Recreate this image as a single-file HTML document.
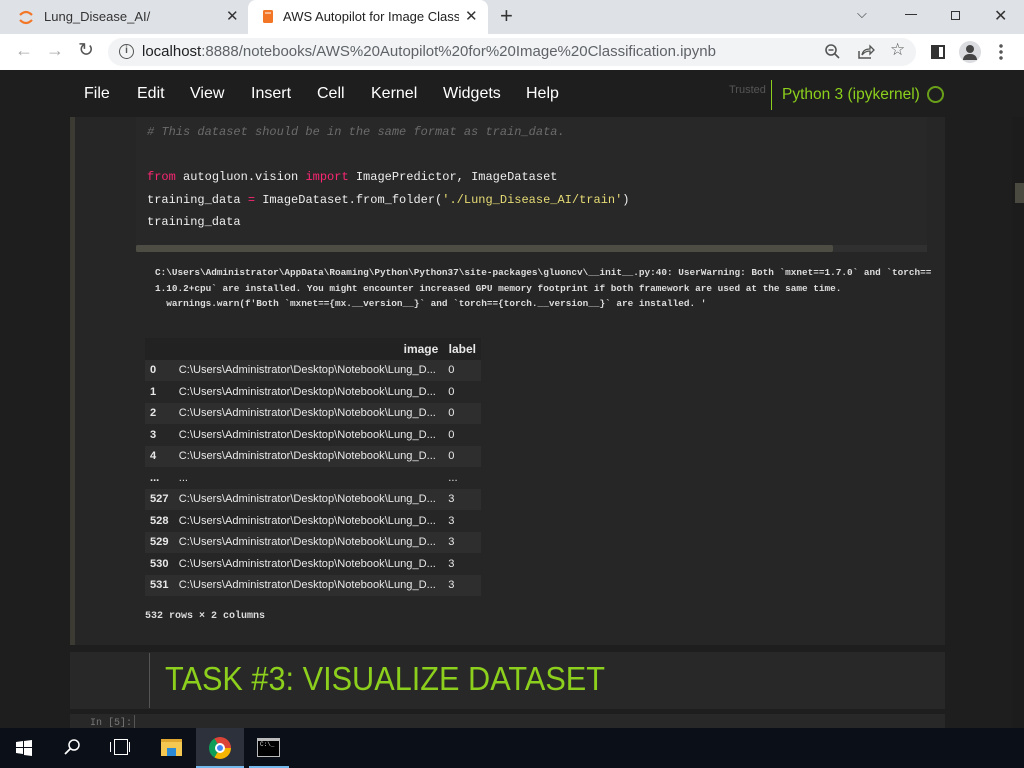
<!DOCTYPE html>
<html><head><meta charset="utf-8"><style>
*{margin:0;padding:0;box-sizing:border-box}
body{width:1024px;height:768px;overflow:hidden;background:#1e1e1e;font-family:"Liberation Sans",sans-serif;position:relative}
.abs{position:absolute}
.mono{font-family:"Liberation Mono",monospace}
#tabs{left:0;top:0;width:1024px;height:34px;background:#dee1e6}
#addr{left:0;top:34px;width:1024px;height:36px;background:#fff}
#hdr{left:0;top:70px;width:1024px;height:47px;background:#1e1e1e}
.menu{top:85px;color:#fff;font-size:16px}
table{border-collapse:collapse;font-size:11.1px;color:#e8e8e8;font-family:"Liberation Sans",sans-serif}
td,th{height:21.5px;padding:0 5px;white-space:nowrap}
th{font-weight:bold;text-align:right;font-size:12px}
td:first-child{font-weight:bold}
tr.s td{background:#2e2e2e}
</style></head><body>
<div id="tabs" class="abs">
 <div class="abs" style="left:248px;top:0;width:240px;height:34px;background:#fff;border-radius:8px 8px 0 0"></div>
 <svg class="abs" style="left:18px;top:9px" width="16" height="16"><path d="M2 6 Q8 0 14 6" stroke="#f37626" stroke-width="2.2" fill="none"/><path d="M2 11 Q8 17 14 11" stroke="#f37626" stroke-width="2.2" fill="none"/></svg>
 <div class="abs" style="left:44px;top:9px;font-size:13px;color:#333">Lung_Disease_AI/</div>
 <div class="abs" style="left:226px;top:7px;font-size:15px;color:#333">✕</div>
 <svg class="abs" style="left:261px;top:9px" width="14" height="15"><rect x="2" y="1" width="10" height="13" rx="1.5" fill="#f37626"/><path d="M4 4h6" stroke="#fff"/></svg>
 <div class="abs" style="left:283px;top:9px;font-size:13px;color:#222;width:176px;overflow:hidden;white-space:nowrap">AWS Autopilot for Image Classific</div>
 <div class="abs" style="left:465px;top:7px;font-size:15px;color:#333">✕</div>
 <div class="abs" style="left:500px;top:3px;font-size:22px;color:#333">+</div>
 <div class="abs" style="left:857px;top:6px;font-size:13px;color:#333">⌵</div>
 <div class="abs" style="left:905px;top:14px;width:12px;height:1px;background:#333"></div>
 <div class="abs" style="left:951px;top:11px;width:9px;height:9px;border:1px solid #333"></div>
 <div class="abs" style="left:994px;top:6px;font-size:16px;color:#333">✕</div>
</div>
<div id="addr" class="abs">
 <div class="abs" style="left:15px;top:6px;font-size:18px;color:#aaa">←</div>
 <div class="abs" style="left:46px;top:6px;font-size:18px;color:#aaa">→</div>
 <div class="abs" style="left:78px;top:5px;font-size:19px;color:#555">↻</div>
 <div class="abs" style="left:108px;top:4px;width:808px;height:28px;background:#f1f3f4;border-radius:14px"></div>
 <div class="abs" style="left:119px;top:10px;width:15px;height:15px;border:1.6px solid #555;border-radius:50%;font-size:10px;text-align:center;line-height:12px;color:#555;font-weight:bold">i</div>
 <div class="abs" style="left:142px;top:9px;font-size:15px;color:#202124">localhost<span style="color:#5f6368">:8888/notebooks/AWS%20Autopilot%20for%20Image%20Classification.ipynb</span></div>
 <svg class="abs" style="left:824px;top:9px" width="18" height="18"><circle cx="7" cy="7" r="5" stroke="#555" stroke-width="1.6" fill="none"/><path d="M4.5 7h5M11 11l4 4" stroke="#555" stroke-width="1.6"/></svg>
 <svg class="abs" style="left:857px;top:9px" width="18" height="18"><path d="M2 8v7h12" stroke="#555" stroke-width="1.5" fill="none"/><path d="M5 12q1-6 8-6V3l4 4-4 4V8q-5 0-8 4z" stroke="#555" stroke-width="1.3" fill="none"/></svg>
 <div class="abs" style="left:890px;top:6px;font-size:17px;color:#555">☆</div>
 <div class="abs" style="left:931px;top:11px;width:14px;height:14px;border:2px solid #333;border-left-width:8px"></div>
 <div class="abs" style="left:959px;top:7px;width:22px;height:22px;border-radius:50%;background:#dadce0"></div>
 <div class="abs" style="left:966px;top:11px;width:8px;height:8px;border-radius:50%;background:#444"></div>
 <div class="abs" style="left:963px;top:20px;width:14px;height:6px;border-radius:7px 7px 0 0;background:#444"></div>
 <div class="abs" style="left:999px;top:9px;width:4px;height:18px;background:radial-gradient(circle,#555 1.5px,transparent 2px) 0 0/4px 6px"></div>
</div>
<div id="hdr" class="abs"></div>
<div class="abs menu" style="left:84px">File</div>
<div class="abs menu" style="left:137px">Edit</div>
<div class="abs menu" style="left:190px">View</div>
<div class="abs menu" style="left:251px">Insert</div>
<div class="abs menu" style="left:317px">Cell</div>
<div class="abs menu" style="left:371px">Kernel</div>
<div class="abs menu" style="left:443px">Widgets</div>
<div class="abs menu" style="left:526px">Help</div>
<div class="abs" style="left:729px;top:84px;font-size:11px;color:#555">Trusted</div>
<div class="abs" style="left:771px;top:80px;width:1px;height:30px;background:#8ccf1c"></div>
<div class="abs" style="left:782px;top:86px;font-size:15.5px;color:#8ccf1c">Python 3 (ipykernel)</div>
<div class="abs" style="left:927px;top:86px;width:17px;height:17px;border:2px solid #6aa019;border-radius:50%"></div>
<div class="abs" style="left:1012px;top:117px;width:12px;height:611px;background:#1c1c1c"></div>
<div class="abs" style="left:1015px;top:183px;width:9px;height:20px;background:#4a4a40"></div>
<div class="abs" style="left:70px;top:117px;width:875px;height:528px;background:#262626;border-left:5px solid #3b3b33"></div>
<div class="abs" style="left:136px;top:117px;width:791px;height:135px;background:#282828"></div>
<div class="abs mono" style="left:147px;top:121px;font-size:12px;line-height:22.5px;color:#eee;white-space:pre"><span style="color:#6b6b6b;font-style:italic"># This dataset should be in the same format as train_data.</span>

<span style="color:#f92672">from</span> autogluon.vision <span style="color:#f92672">import</span> ImagePredictor, ImageDataset
training_data <span style="color:#f92672">=</span> ImageDataset.from_folder(<span style="color:#e6db74">'./Lung_Disease_AI/train'</span>)
training_data</div>
<div class="abs" style="left:136px;top:245px;width:791px;height:7px;background:#303030"></div>
<div class="abs" style="left:136px;top:245px;width:697px;height:7px;background:#4d4d44;border-radius:2px"></div>
<div class="abs mono" style="left:155px;top:265px;font-size:9.4px;font-weight:bold;line-height:15.5px;color:#ddd;white-space:pre">C:\Users\Administrator\AppData\Roaming\Python\Python37\site-packages\gluoncv\__init__.py:40: UserWarning: Both `mxnet==1.7.0` and `torch==
1.10.2+cpu` are installed. You might encounter increased GPU memory footprint if both framework are used at the same time.
  warnings.warn(f'Both `mxnet=={mx.__version__}` and `torch=={torch.__version__}` are installed. '</div>
<table class="abs" style="left:145px;top:338px;width:336px;background:#262626">
<tr style="background:#222"><th></th><th>image</th><th>label</th></tr>
<tr class="s"><td>0</td><td>C:\Users\Administrator\Desktop\Notebook\Lung_D...</td><td>0</td></tr>
<tr><td>1</td><td>C:\Users\Administrator\Desktop\Notebook\Lung_D...</td><td>0</td></tr>
<tr class="s"><td>2</td><td>C:\Users\Administrator\Desktop\Notebook\Lung_D...</td><td>0</td></tr>
<tr><td>3</td><td>C:\Users\Administrator\Desktop\Notebook\Lung_D...</td><td>0</td></tr>
<tr class="s"><td>4</td><td>C:\Users\Administrator\Desktop\Notebook\Lung_D...</td><td>0</td></tr>
<tr><td>...</td><td>...</td><td>...</td></tr>
<tr class="s"><td>527</td><td>C:\Users\Administrator\Desktop\Notebook\Lung_D...</td><td>3</td></tr>
<tr><td>528</td><td>C:\Users\Administrator\Desktop\Notebook\Lung_D...</td><td>3</td></tr>
<tr class="s"><td>529</td><td>C:\Users\Administrator\Desktop\Notebook\Lung_D...</td><td>3</td></tr>
<tr><td>530</td><td>C:\Users\Administrator\Desktop\Notebook\Lung_D...</td><td>3</td></tr>
<tr class="s"><td>531</td><td>C:\Users\Administrator\Desktop\Notebook\Lung_D...</td><td>3</td></tr>
</table>
<div class="abs mono" style="left:145px;top:611px;font-size:10px;color:#ddd;font-weight:bold">532 rows × 2 columns</div>
<div class="abs" style="left:70px;top:652px;width:875px;height:57px;background:#282828"></div>
<div class="abs" style="left:149px;top:653px;width:1px;height:55px;background:#555"></div>
<div class="abs" style="left:165px;top:660px;font-size:33px;color:#8ccf1c;transform:scaleX(.93);transform-origin:left">TASK #3: VISUALIZE DATASET</div>
<div class="abs" style="left:70px;top:714px;width:875px;height:14px;background:#282828"></div>
<div class="abs" style="left:134px;top:715px;width:1px;height:13px;background:#555"></div>
<div class="abs mono" style="left:90px;top:718px;font-size:10px;color:#777">In [5]:</div>
<div class="abs" style="left:0;top:728px;width:1024px;height:40px;background:#0b0f18"></div>
<svg class="abs" style="left:16px;top:740px" width="16" height="16"><path d="M0 2l7-1v6H0zM8 1l8-1v7H8zM0 8h7v6l-7-1zM8 8h8v8l-8-1z" fill="#fff"/></svg>
<svg class="abs" style="left:63px;top:738px" width="18" height="18"><circle cx="11" cy="7" r="5" stroke="#fff" stroke-width="1.5" fill="none"/><path d="M7.5 10.5L2 16" stroke="#fff" stroke-width="1.8"/></svg>
<div class="abs" style="left:114px;top:739px;width:14px;height:16px;border:1.5px solid #fff"></div>
<div class="abs" style="left:110px;top:742px;width:20px;height:10px;border-left:1.5px solid #fff;border-right:1.5px solid #fff"></div>
<div class="abs" style="left:161px;top:739px;width:21px;height:17px;background:#f5c851;border-top:3px solid #e0a830"></div>
<div class="abs" style="left:167px;top:748px;width:9px;height:8px;background:#2a8ad6"></div>
<div class="abs" style="left:196px;top:728px;width:48px;height:40px;background:#2d313b;border-bottom:2px solid #76b9ed"></div>
<div class="abs" style="left:209px;top:737px;width:22px;height:22px;border-radius:50%;background:conic-gradient(from -30deg,#db4437 0 120deg,#f4b400 0 240deg,#0f9d58 0)"></div>
<div class="abs" style="left:215px;top:743px;width:10px;height:10px;border-radius:50%;background:#4285f4;border:2px solid #fff"></div>
<div class="abs" style="left:249px;top:766px;width:40px;height:2px;background:#76b9ed"></div>
<div class="abs" style="left:257px;top:738px;width:23px;height:19px;background:#000;border:1.5px solid #bbb;border-top:3px solid #bbb"></div>
<div class="abs mono" style="left:260px;top:741px;font-size:6px;color:#ddd">C:\_</div>
</body></html>
